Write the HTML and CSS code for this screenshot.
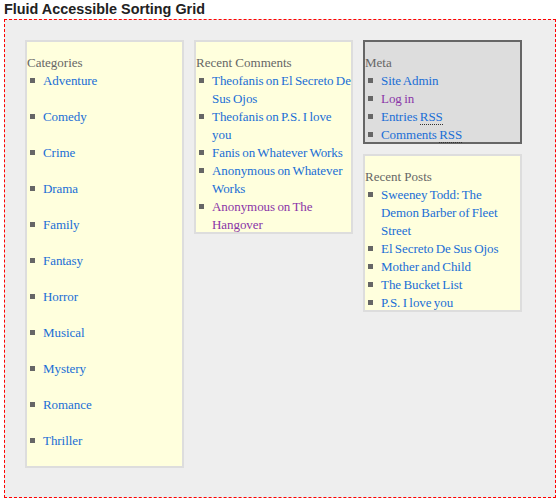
FILE: index.html
```html
<!DOCTYPE html>
<html>
<head>
<meta charset="utf-8">
<title>Fluid Accessible Sorting Grid</title>
<link rel="stylesheet" href="styles.css">
</head>
<body>
<h1 class="title">Fluid Accessible Sorting Grid</h1>
<div class="grid">
  <div class="column">
    <div class="card">
      <h2 class="card-title">Categories</h2>
      <ul class="list list-spaced">
        <li><a href="#">Adventure</a></li>
        <li><a href="#">Comedy</a></li>
        <li><a href="#">Crime</a></li>
        <li><a href="#">Drama</a></li>
        <li><a href="#">Family</a></li>
        <li><a href="#">Fantasy</a></li>
        <li><a href="#">Horror</a></li>
        <li><a href="#">Musical</a></li>
        <li><a href="#">Mystery</a></li>
        <li><a href="#">Romance</a></li>
        <li><a href="#">Thriller</a></li>
      </ul>
    </div>
  </div>
  <div class="column">
    <div class="card">
      <h2 class="card-title">Recent Comments</h2>
      <ul class="list">
        <li><a href="#">Theofanis on El Secreto De Sus Ojos</a></li>
        <li><a href="#">Theofanis on P.S. I love you</a></li>
        <li><a href="#">Fanis on Whatever Works</a></li>
        <li><a href="#">Anonymous on Whatever Works</a></li>
        <li><a href="#" class="visited">Anonymous on The Hangover</a></li>
      </ul>
    </div>
  </div>
  <div class="column">
    <div class="card card-selected">
      <h2 class="card-title">Meta</h2>
      <ul class="list">
        <li><a href="#">Site Admin</a></li>
        <li><a href="#" class="visited">Log in</a></li>
        <li><a href="#">Entries <abbr class="abbr" title="Really Simple Syndication">RSS</abbr></a></li>
        <li><a href="#">Comments <abbr class="abbr" title="Really Simple Syndication">RSS</abbr></a></li>
      </ul>
    </div>
    <div class="card">
      <h2 class="card-title">Recent Posts</h2>
      <ul class="list">
        <li><a href="#">Sweeney Todd: The Demon Barber of Fleet Street</a></li>
        <li><a href="#">El Secreto De Sus Ojos</a></li>
        <li><a href="#">Mother and Child</a></li>
        <li><a href="#">The Bucket List</a></li>
        <li><a href="#">P.S. I love you</a></li>
      </ul>
    </div>
  </div>
</div>
</body>
</html>
```

FILE: styles.css
```css
html, body {
  margin: 0;
  padding: 0;
  background: #ffffff;
}

body {
  padding: 0 3px 0 4px;
  font-family: "Liberation Serif", serif;
}

.title {
  margin: 0;
  font-family: "Liberation Sans", Arial, sans-serif;
  font-size: 14.4px;
  line-height: 19px;
  font-weight: bold;
  color: #222222;
}

.grid {
  display: flex;
  align-items: flex-start;
  gap: 10px;
  height: 479px;
  box-sizing: border-box;
  padding: 20px;
  border: 1px dashed #ff0000;
  background: #eeeeee;
}

.column {
  display: flex;
  flex-direction: column;
  gap: 10px;
  width: 159px;
}

.card {
  border: 2px solid #dddddd;
  background: #ffffdd;
  font-size: 13px;
  line-height: 18px;
}

.card-selected {
  border-color: #666666;
  background: #dddddd;
}

.card-title {
  margin: 0;
  padding-top: 12px;
  font-size: 13px;
  line-height: 18px;
  font-weight: normal;
  color: #666666;
}

.list {
  margin: 0 0 -2px 0;
  padding: 0 0 0 16px;
  list-style: none;
  word-spacing: -0.8px;
  letter-spacing: -0.06px;
}

.list li::before {
  content: "";
  display: inline-block;
  width: 5px;
  height: 5px;
  margin-left: -13px;
  margin-right: 8px;
  vertical-align: 2px;
  background: #666666;
}

.list-spaced li {
  margin-bottom: 18px;
}

.list a {
  color: #1a6ed6;
  text-decoration: none;
}

.list a.visited {
  color: #8a35a8;
}

.abbr {
  text-decoration: none;
  border-bottom: 1px dotted #333333;
}
```
